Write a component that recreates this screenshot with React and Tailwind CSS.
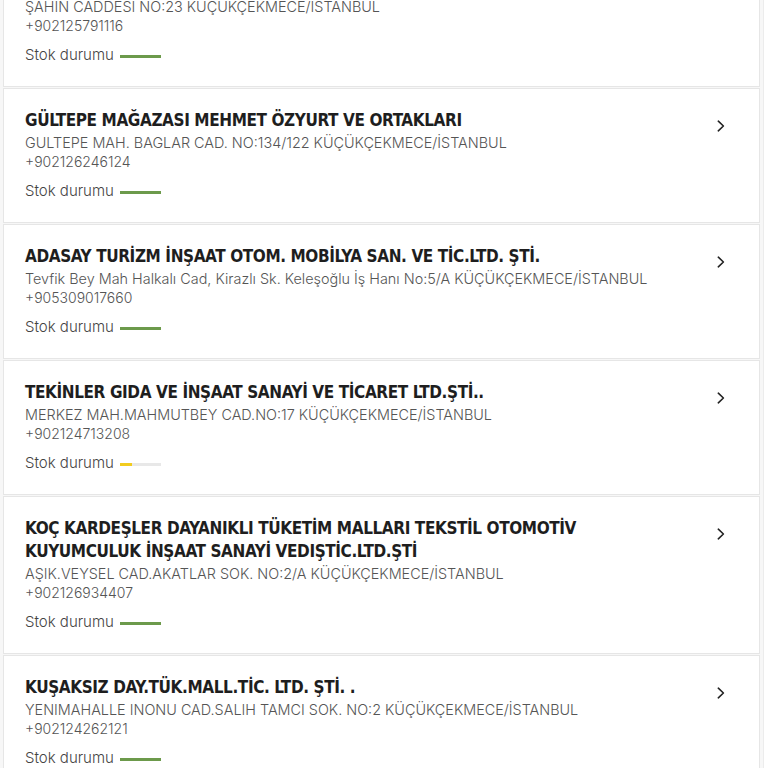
import React from "react";

const items = [
  {
    title: null,
    address: "ŞAHİN CADDESİ NO:23 KÜÇÜKÇEKMECE/İSTANBUL",
    phone: "+902125791116",
    stock: "full",
  },
  {
    title: ["GÜLTEPE MAĞAZASI MEHMET ÖZYURT VE ORTAKLARI"],
    address: "GULTEPE MAH. BAGLAR CAD. NO:134/122 KÜÇÜKÇEKMECE/İSTANBUL",
    phone: "+902126246124",
    stock: "full",
  },
  {
    title: ["ADASAY TURİZM İNŞAAT OTOM. MOBİLYA SAN. VE TİC.LTD. ŞTİ."],
    address:
      "Tevfik Bey Mah Halkalı Cad, Kirazlı Sk. Keleşoğlu İş Hanı No:5/A KÜÇÜKÇEKMECE/İSTANBUL",
    phone: "+905309017660",
    stock: "full",
  },
  {
    title: ["TEKİNLER GIDA VE İNŞAAT SANAYİ VE TİCARET LTD.ŞTİ.."],
    address: "MERKEZ MAH.MAHMUTBEY CAD.NO:17 KÜÇÜKÇEKMECE/İSTANBUL",
    phone: "+902124713208",
    stock: "low",
  },
  {
    title: [
      "KOÇ KARDEŞLER DAYANIKLI TÜKETİM MALLARI TEKSTİL OTOMOTİV",
      "KUYUMCULUK İNŞAAT SANAYİ VEDIŞTİC.LTD.ŞTİ",
    ],
    address: "AŞIK.VEYSEL CAD.AKATLAR SOK. NO:2/A KÜÇÜKÇEKMECE/İSTANBUL",
    phone: "+902126934407",
    stock: "full",
  },
  {
    title: ["KUŞAKSIZ DAY.TÜK.MALL.TİC. LTD. ŞTİ. ."],
    address: "YENIMAHALLE INONU CAD.SALIH TAMCI SOK. NO:2 KÜÇÜKÇEKMECE/İSTANBUL",
    phone: "+902124262121",
    stock: "full",
  },
];

function Chevron() {
  return (
    <svg width="8" height="12" viewBox="0 0 8 12" className="block">
      <path d="M1.3 1.2 L6.4 6 L1.3 10.8" fill="none" stroke="#222" strokeWidth="1.6" strokeLinecap="round" strokeLinejoin="round" />
    </svg>
  );
}

function StockBar({ level }) {
  if (level === "low") {
    return (
      <div className="flex h-[3px] w-[41px] bg-[#e8e8e8]">
        <div className="h-full w-[12px] bg-[#f2cc1f]" />
      </div>
    );
  }
  return <div className="h-[3px] w-[41px] bg-[#6c9a4b]" />;
}

function Card({ item, first }) {
  return (
    <div
      className={
        "relative bg-white border border-[#e6e6e6] pl-[21px] pr-[60px] pb-[21px] " +
        (first ? "pt-0 border-t-0" : "pt-[20px]")
      }
    >
      {item.title && (
        <div className="mb-[1px] text-[17px] leading-[23px] font-bold text-[#1e1e1e] tracking-[-0.4px] [font-family:'DejaVu_Sans_Condensed','Roboto',sans-serif]">
          {item.title.map((t, i) => (
            <div key={i}>{t}</div>
          ))}
        </div>
      )}
      <div className="text-[14.4px] leading-[19px] text-[#555] [font-family:'Inter',sans-serif] font-light">
        {item.address}
      </div>
      <div className="text-[14px] leading-[19px] text-[#555] [font-family:'Inter',sans-serif] font-light">
        {item.phone}
      </div>
      <div className="mt-[10px] flex items-center gap-[6px] h-[20px]">
        <span className="text-[15px] leading-[20px] text-[#444] [font-family:'Inter',sans-serif] font-light">
          Stok durumu
        </span>
        <div className="mt-[3px]">
          <StockBar level={item.stock} />
        </div>
      </div>
      {item.title && (
        <div className="absolute right-[34px] top-[31px]">
          <Chevron />
        </div>
      )}
    </div>
  );
}

export default function App() {
  return (
    <div className="w-[768px] h-[768px] overflow-hidden bg-white">
      <div className="w-[764px] border-r border-[#ececec] pl-[3px] pr-[3px] mt-[-3px] flex flex-col gap-[1px] bg-[#f7f7f7]">
        {items.map((it, i) => (
          <Card key={i} item={it} first={i === 0} />
        ))}
      </div>
    </div>
  );
}
